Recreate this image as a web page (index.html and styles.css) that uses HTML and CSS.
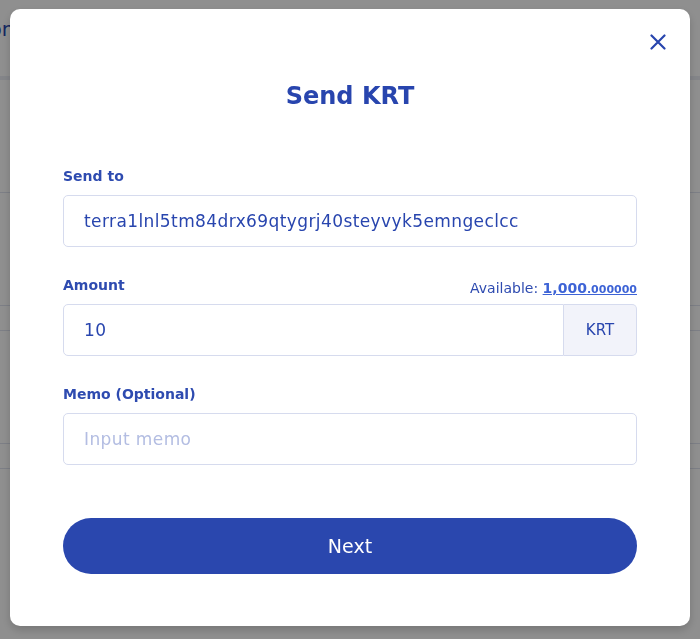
FILE: index.html
```html
<!DOCTYPE html>
<html lang="en">
<head>
<meta charset="UTF-8">
<meta name="viewport" content="width=device-width, initial-scale=1.0">
<title>Send KRT</title>
<link rel="stylesheet" href="styles.css">
</head>
<body>

<!-- Page behind the modal -->
<div class="page">
  <div class="page-header"><span class="page-title">Transaction</span></div>
  <div class="page-row tall"></div>
  <div class="page-row tall"></div>
  <div class="page-row short"></div>
  <div class="page-row tall"></div>
  <div class="page-row short"></div>
</div>

<!-- Send modal -->
<div class="overlay">
  <div class="modal">
    <button class="close" type="button" aria-label="Close">
      <svg width="16" height="16" viewBox="0 0 16 16">
        <path d="M1.5 1.5 L14.5 14.5 M14.5 1.5 L1.5 14.5" stroke="currentColor" stroke-width="2.2" stroke-linecap="round" fill="none"/>
      </svg>
    </button>

    <h1 class="modal-title">Send KRT</h1>

    <form class="send-form">
      <div class="field">
        <div class="field-head">
          <label for="sendTo">Send to</label>
        </div>
        <input class="text-input" id="sendTo" type="text" value="terra1lnl5tm84drx69qtygrj40steyvyk5emngeclcc">
      </div>

      <div class="field">
        <div class="field-head">
          <label for="amount">Amount</label>
          <span class="available">Available: <a href="#">1,000<small>.000000</small></a></span>
        </div>
        <div class="input-group">
          <input class="text-input" id="amount" type="text" value="10">
          <span class="unit">KRT</span>
        </div>
      </div>

      <div class="field">
        <div class="field-head">
          <label for="memo">Memo (Optional)</label>
        </div>
        <input class="text-input" id="memo" type="text" placeholder="Input memo">
      </div>

      <button class="submit" type="submit">Next</button>
    </form>
  </div>
</div>

</body>
</html>
```

FILE: styles.css
```css
/* Send modal */
body {
  font-family: "DejaVu Sans", "Open Sans", sans-serif;
  background-color: #fff;
  margin: 0;
  padding: 0;
}

/* background page */
.page {
  height: 639px;
  overflow: hidden;
}
.page-header {
  height: 76px;
  border-bottom: 4px solid #eceef5;
  position: relative;
}
.page-title {
  position: absolute;
  top: 17px;
  left: -100px;
  font-size: 20px;
  color: #2845ae;
}
.page-row {
  border-bottom: 1px solid #dfe3ef;
}
.page-row.tall {
  height: 112px;
}
.page-row.short {
  height: 24px;
}

.overlay {
  position: fixed;
  top: 0;
  left: 0;
  right: 0;
  bottom: 0;
  background-color: rgba(0, 0, 0, 0.44);
  padding: 9px 10px 0;
}
.modal {
  position: relative;
  height: 617px;
  box-sizing: border-box;
  padding: 69px 53px 0 53px;
  background-color: #fff;
  border-radius: 10px;
  box-shadow: 0 4px 10px rgba(0, 0, 0, 0.18);
}
.close {
  position: absolute;
  top: 25px;
  right: 24px;
  padding: 0;
  border: none;
  background: none;
  color: #2845ae;
  line-height: 0;
  cursor: pointer;
}
.modal-title {
  margin: 0;
  text-align: center;
  font-size: 24px;
  line-height: 36px;
  font-weight: 700;
  color: #2845ae;
}

.send-form {
  margin-top: 52px;
}
.field {
  margin-bottom: 28px;
}
.field-head {
  display: flex;
  justify-content: space-between;
  align-items: flex-end;
  height: 20px;
  margin-bottom: 9px;
}
label {
  font-size: 14px;
  font-weight: 700;
  color: #2e4bb0;
  line-height: 20px;
}
.available {
  font-size: 14px;
  color: #2e4bb0;
  line-height: 16px;
  margin-bottom: -3px;
}
.available a {
  color: #3d63d6;
  font-weight: 600;
  text-decoration: underline;
}
.available small {
  font-size: 11px;
  font-weight: 600;
}

.text-input {
  display: block;
  width: 100%;
  box-sizing: border-box;
  height: 52px;
  padding: 0 20px;
  border: 1px solid #d6dbee;
  border-radius: 5px;
  font-family: inherit;
  font-size: 17px;
  letter-spacing: 0.4px;
  color: #2845ae;
  outline: none;
}
.text-input::placeholder {
  color: #b3bde2;
}
.input-group {
  display: flex;
}
.input-group .text-input {
  flex: 1;
  border-radius: 5px 0 0 5px;
}
.unit {
  width: 73px;
  flex: none;
  display: flex;
  align-items: center;
  justify-content: center;
  box-sizing: border-box;
  border: 1px solid #d6dbee;
  border-left: none;
  border-radius: 0 5px 5px 0;
  background-color: #f2f3fa;
  font-size: 15px;
  color: #2845ae;
}

.submit {
  display: block;
  width: 100%;
  height: 56px;
  margin-top: 53px;
  border: none;
  border-radius: 28px;
  background-color: #2a47ae;
  color: #fff;
  font-family: inherit;
  font-size: 19px;
  cursor: pointer;
}
```
